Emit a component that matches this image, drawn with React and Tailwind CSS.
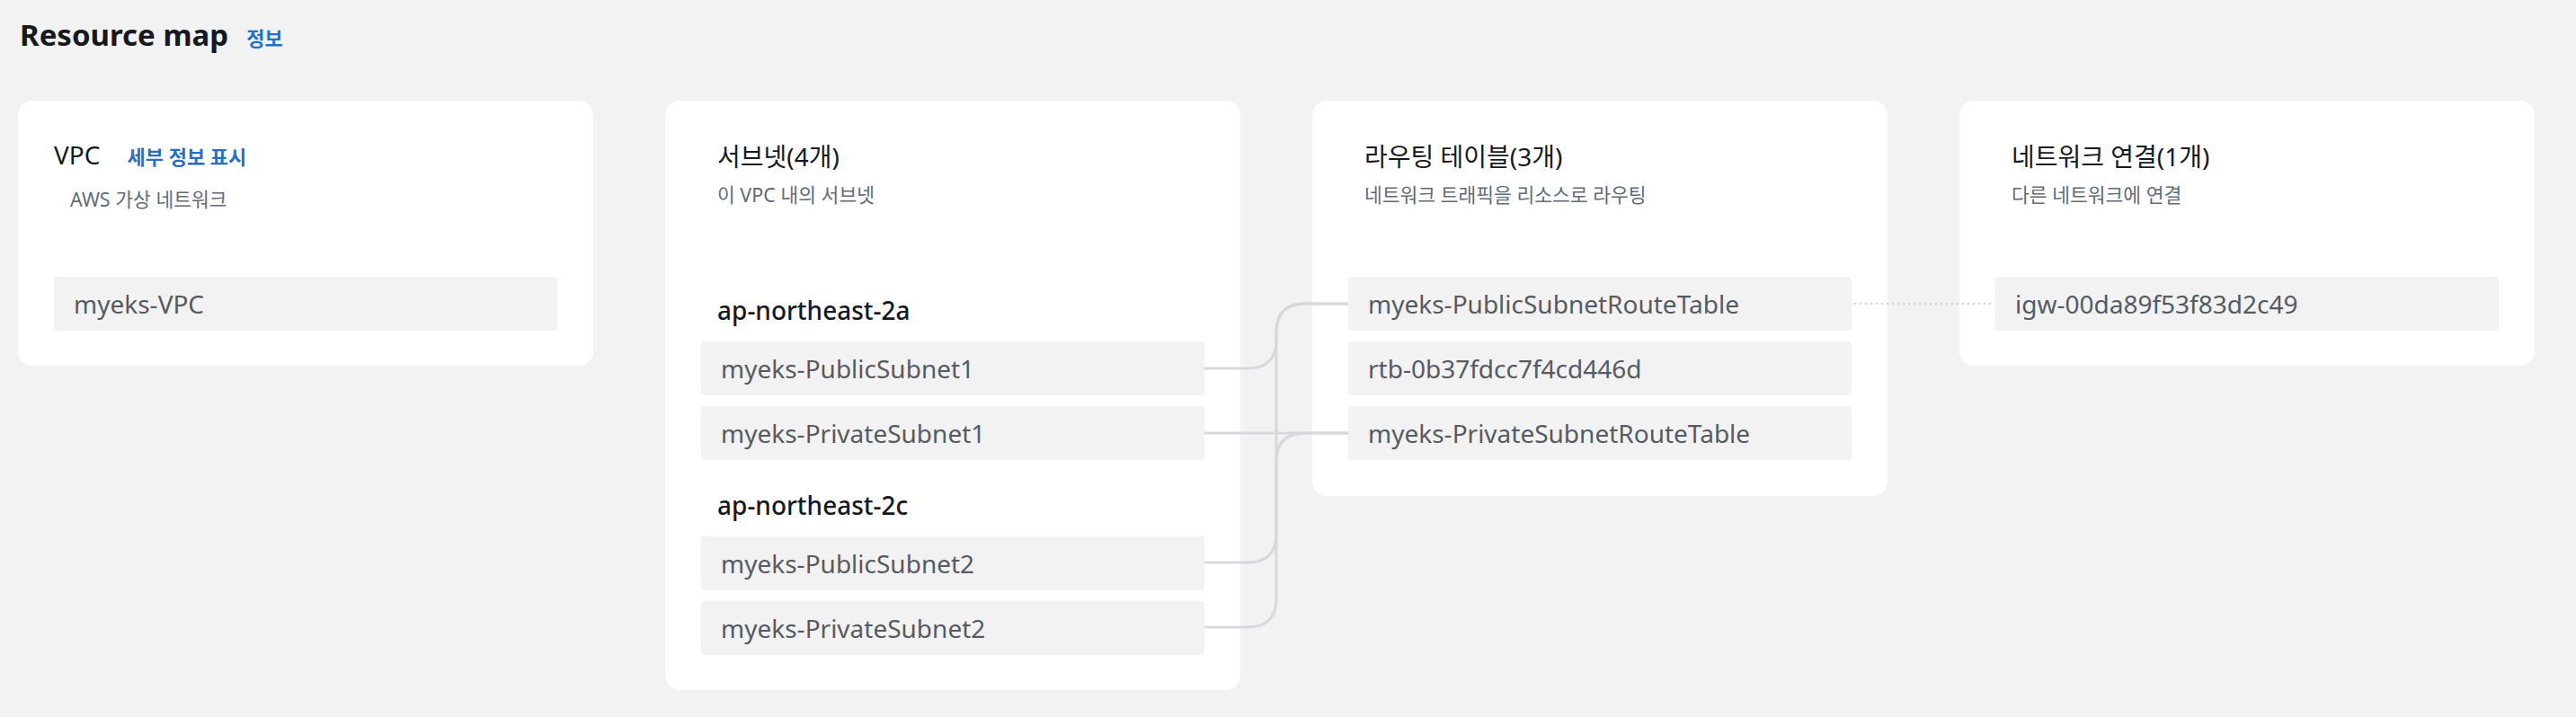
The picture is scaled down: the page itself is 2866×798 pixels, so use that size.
import React from 'react';

const subnetGroups = [
  { zone: 'ap-northeast-2a', items: ['myeks-PublicSubnet1', 'myeks-PrivateSubnet1'], mt: 'mt-[19px]' },
  { zone: 'ap-northeast-2c', items: ['myeks-PublicSubnet2', 'myeks-PrivateSubnet2'], mt: 'mt-[32px]' },
];

const routeTables = ['myeks-PublicSubnetRouteTable', 'rtb-0b37fdcc7f4cd446d', 'myeks-PrivateSubnetRouteTable'];

// connector paths between subnet items and route table items (page coords)
const links = [
  'M1340 410 H1388 Q1420 410 1420 378 V370 Q1420 338 1452 338 H1500',
  'M1340 482 H1500',
  'M1340 626 H1388 Q1420 626 1420 594 V370 Q1420 338 1452 338 H1500',
  'M1340 698 H1388 Q1420 698 1420 666 V514 Q1420 482 1452 482 H1500',
];

const Item = ({ children }) => (
  <div className="h-[60px] rounded-[4px] bg-[#f2f2f2] flex items-center pl-[22px] text-[28px] leading-[38px] text-[#545b64]">
    {children}
  </div>
);

const CardHeader = ({ title, desc }) => (
  <div className="h-[196px] pt-[44px] pl-[18px]">
    <div className="text-[28px] leading-[36px] text-[#16191f]">{title}</div>
    <div className="mt-[10px] text-[21.5px] leading-[30px] text-[#5f6b7a]">{desc}</div>
  </div>
);

export default function App() {
  return (
    <div className="relative w-full h-[798px] bg-[#f2f2f2] overflow-hidden font-['Noto_Sans','Noto_Sans_CJK_KR',sans-serif]">
      {/* Page title */}
      <div className="h-[112px] pt-[19px] pl-[22px] flex items-baseline gap-[20px]">
        <h1 className="text-[33px] leading-[40px] font-bold text-[#16191f]">Resource map</h1>
        <span className="text-[22px] font-bold text-[#2370c6]">정보</span>
      </div>

      <div className="flex items-start gap-[80px] pl-[20px]">
        {/* VPC */}
        <div className="w-[640px] bg-white rounded-[16px] px-[40px] pb-[39px]">
          <div className="h-[196px] pt-[42px]">
            <div className="flex items-baseline gap-[30px]">
              <span className="text-[28px] leading-[36px] text-[#16191f]">VPC</span>
              <span className="text-[22px] font-bold text-[#2370c6]">세부 정보 표시</span>
            </div>
            <div className="mt-[16px] pl-[18px] text-[21.5px] leading-[30px] text-[#5f6b7a]">AWS 가상 네트워크</div>
          </div>
          <Item>myeks-VPC</Item>
        </div>

        {/* Subnets */}
        <div className="w-[640px] bg-white rounded-[16px] px-[40px] pb-[39px]">
          <CardHeader title="서브넷(4개)" desc="이 VPC 내의 서브넷" />
          {subnetGroups.map((g) => (
            <div key={g.zone}>
              <div className={`${g.mt} mb-[17px] pl-[18px] text-[28px] leading-[36px] font-medium text-[#16191f]`}>
                {g.zone}
              </div>
              <div className="flex flex-col gap-[12px]">
                {g.items.map((s) => (
                  <Item key={s}>{s}</Item>
                ))}
              </div>
            </div>
          ))}
        </div>

        {/* Route tables */}
        <div className="w-[640px] bg-white rounded-[16px] px-[40px] pb-[40px]">
          <CardHeader title="라우팅 테이블(3개)" desc="네트워크 트래픽을 리소스로 라우팅" />
          <div className="flex flex-col gap-[12px]">
            {routeTables.map((r) => (
              <Item key={r}>{r}</Item>
            ))}
          </div>
        </div>

        {/* Network connections */}
        <div className="w-[640px] bg-white rounded-[16px] px-[40px] pb-[39px]">
          <CardHeader title="네트워크 연결(1개)" desc="다른 네트워크에 연결" />
          <Item>igw-00da89f53f83d2c49</Item>
        </div>
      </div>

      {/* connectors */}
      <svg className="absolute top-0 left-0 pointer-events-none" width="2866" height="798">
        {links.map((d, i) => (
          <path key={i} d={d} fill="none" stroke="#d5d9dc" strokeWidth="3" />
        ))}
        <path d="M2064 338 H2218" fill="none" stroke="#cfd3d7" strokeWidth="2.5" strokeLinecap="round" strokeDasharray="0 6" />
      </svg>
    </div>
  );
}
